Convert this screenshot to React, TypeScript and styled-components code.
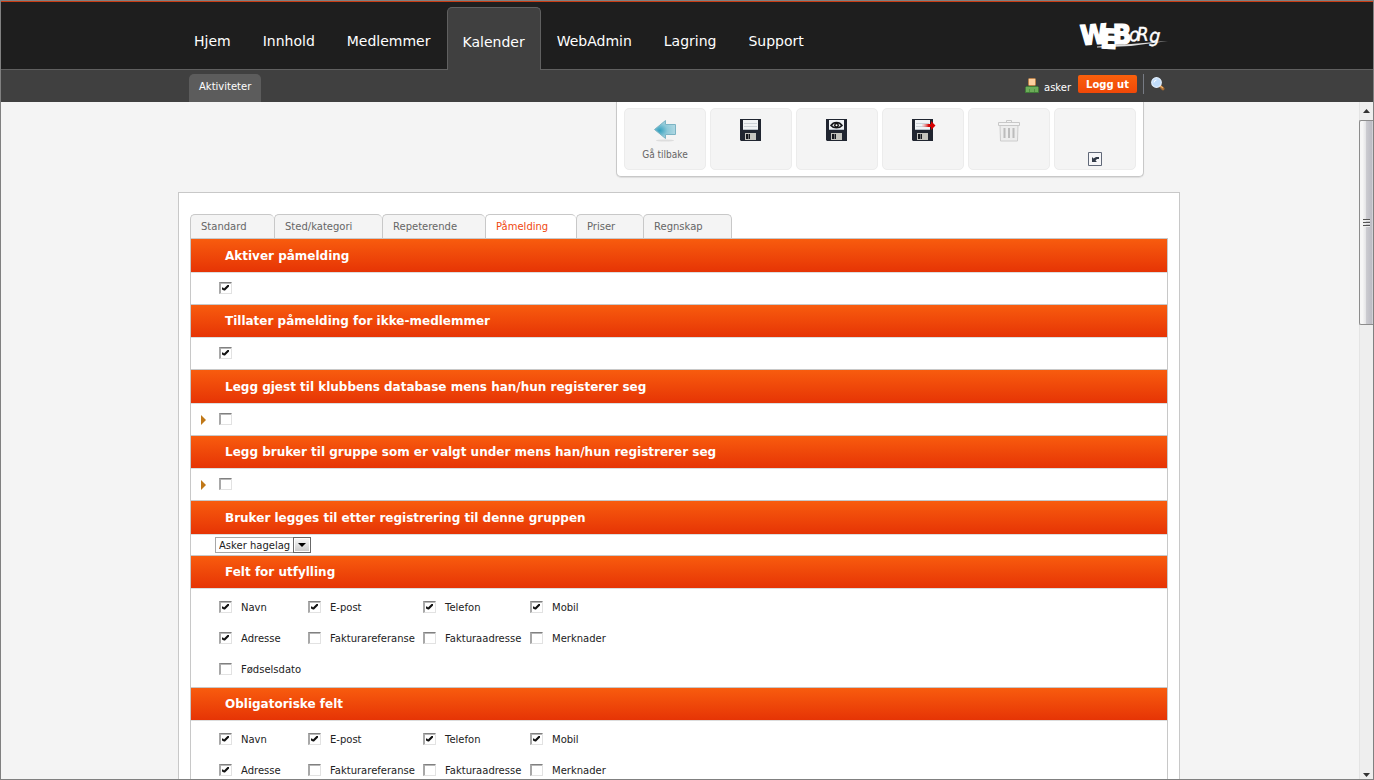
import React from "react";
import styled, { createGlobalStyle, css } from "styled-components";

const Global = createGlobalStyle`
  *, *::before, *::after { box-sizing: border-box; }
  html, body { margin: 0; padding: 0; height: 100%; }
  body, button, select, input { font-family: "DejaVu Sans", Verdana, sans-serif; }
`;

const Page = styled.div`
  display: flex;
  flex-direction: column;
  height: 100vh;
  overflow: hidden;
  border: 1px solid #808080;
  background: #f4f4f4;
  color: #222;
  font-size: 10px;
  line-height: 14px;
`;

const Header = styled.header`
  flex: none;
  padding-right: 16px;
  border-top: 1px solid #c83c14;
  border-bottom: 1px solid #606060;
  background: #1e1e1e;
`;

const HeaderInner = styled.div`
  display: flex;
  align-items: flex-start;
  justify-content: space-between;
  max-width: 1004px;
  height: 67px;
  margin: 0 auto;
`;

const MainNav = styled.nav`
  display: flex;
  height: 68px;
  padding: 5px 0 0 1px;
`;

const NavLink = styled.a<{ $active?: boolean }>`
  padding: 24px 16px 0;
  color: #fff;
  font-size: 14px;
  line-height: 20px;
  text-decoration: none;
  ${(p) =>
    p.$active &&
    css`
      padding: 24px 15px 0;
      border: 1px solid #606060;
      border-bottom: 0;
      border-radius: 5px 5px 0 0;
      background: #404040;
    `}
`;

const LogoLink = styled.a`
  display: block;
  margin: 16px 12px 0 0;
  svg { display: block; }
`;

const SubBar = styled.div`
  flex: none;
  padding-right: 16px;
  background: #404040;
`;

const SubInner = styled.div`
  display: flex;
  justify-content: space-between;
  max-width: 1004px;
  height: 32px;
  margin: 0 auto;
  padding: 4px 16px 0 12px;
`;

const SubTab = styled.a`
  padding: 6px 10px 0;
  border-radius: 5px 5px 0 0;
  background: #5c5c5c;
  color: #fff;
  font-size: 10px;
  line-height: 14px;
  text-decoration: none;
`;

const Account = styled.div`
  display: flex;
  align-items: flex-start;
  color: #fff;
  svg { display: block; }
`;

const UserName = styled.span`
  display: flex;
  gap: 5px;
  margin-right: 7px;
  padding-top: 4px;
  line-height: 20px;
`;

const LogoutButton = styled.button`
  height: 18px;
  margin: 1px 6px 0 0;
  padding: 1px 8px 0;
  border: 0;
  border-radius: 2px;
  background: linear-gradient(#f9600c, #f04808);
  color: #fff;
  font-size: 10px;
  font-weight: bold;
  line-height: 18px;
`;

const SearchButton = styled.button`
  height: 20px;
  padding: 0 0 0 7px;
  border: 0;
  border-left: 1px solid #777b84;
  background: none;
`;

const Body = styled.div`
  display: flex;
  flex: 1;
  min-height: 0;
`;

const Content = styled.main`
  flex: 1;
  min-width: 0;
  overflow: hidden;
  padding-right: 2px;
`;

const Column = styled.div`
  max-width: 1002px;
  margin: 0 auto;
`;

const Toolbar = styled.div`
  display: flex;
  gap: 4px;
  width: fit-content;
  margin: 0 36px 15px auto;
  padding: 6px 7px;
  border: 1px solid #c8c8c8;
  border-top: 0;
  border-radius: 0 0 5px 5px;
  background: #fff;
  box-shadow: 0 1px 1px #ddd;
`;

const ToolButton = styled.button`
  display: flex;
  flex-direction: column;
  align-items: center;
  width: 82px;
  height: 62px;
  padding: 9px 0 0;
  border: 1px solid #ececec;
  border-radius: 5px;
  background: #f4f4f4;
  color: #666;
  font-family: "DejaVu Sans Condensed", "DejaVu Sans", sans-serif;
  font-size: 10px;
  line-height: 14px;
  svg { display: block; flex: none; }
`;

const ToolLabel = styled.span`
  margin-top: 6px;
`;

const MissingIcon = styled.span`
  margin-top: 34px;
`;

const Panel = styled.section`
  padding: 21px 11px 24px;
  border: 1px solid #c8c8c8;
  background: #fff;
`;

const Tabs = styled.div`
  display: flex;
  height: 24px;
`;

const Tab = styled.button<{ $active?: boolean; $w: number }>`
  width: ${(p) => p.$w}px;
  padding: 0 0 0 10px;
  border: 1px solid #c8c8c8;
  border-bottom: 0;
  border-right-width: 0;
  border-radius: 5px 5px 0 0;
  background: ${(p) => (p.$active ? "#fff" : "#f4f4f4")};
  color: ${(p) => (p.$active ? "#f04810" : "#666")};
  font-size: 10px;
  line-height: 22px;
  text-align: left;
  &:last-child { border-right-width: 1px; }
`;

const Sections = styled.div`
  border: 1px solid #c8c8c8;
  border-bottom: 0;
`;

const SectionTitle = styled.h2`
  display: flex;
  align-items: center;
  height: 33px;
  margin: 0;
  padding: 0 34px;
  background: linear-gradient(#f85c0e, #e63405);
  color: #fff;
  font-size: 12px;
  font-weight: bold;
  line-height: 16px;
  &:nth-of-type(even), &:last-of-type { height: 32px; }
`;

const SectionBody = styled.div<{ $kind: "check" | "select" | "grid" }>`
  display: flex;
  align-items: center;
  height: ${(p) => (p.$kind === "check" ? "33px" : p.$kind === "select" ? "22px" : "auto")};
  padding: ${(p) => (p.$kind === "grid" ? "3px 28px 2px" : p.$kind === "select" ? "0 24px" : "0 10px")};
  border-top: 1px solid #ddd;
  border-bottom: 1px solid #c8c8c8;
`;

const Marker = styled.span`
  display: flex;
  width: 18px;
  svg { display: block; }
`;

const Check = styled.input`
  appearance: none;
  position: relative;
  flex: none;
  width: 13px;
  height: 12px;
  margin: 0 0 2px;
  border: 1px solid #e2e2e2;
  border-top: 1px solid #808080;
  border-left: 2px solid #a8a8a8;
  background: #fff;
  box-shadow: inset 0 1px 0 #b8b8b8;
  &:checked::after {
    content: "";
    position: absolute;
    left: 1px;
    top: 2px;
    width: 7px;
    height: 7px;
    background: #111;
    clip-path: polygon(0 3px, 1px 3px, 2px 4px, 6px 0, 7px 0, 7px 2px, 3px 6px, 2px 6px, 0 5px);
  }
`;

const FieldGrid = styled.div`
  display: grid;
  grid-template-columns: 89px 115px 107px 107px;
  grid-auto-rows: 31px;
`;

const Field = styled.label`
  display: flex;
  align-items: center;
  gap: 9px;
  white-space: nowrap;
`;

const SelectBox = styled.span`
  display: grid;
  width: 96px;
  height: 16px;
`;

const Select = styled.select`
  grid-area: 1 / 1;
  appearance: none;
  width: 96px;
  height: 16px;
  padding: 1px 18px 0 3px;
  border: 1px solid #a8a8a8;
  border-radius: 0;
  background: #fff;
  color: #222;
  font-size: 10px;
  line-height: 14px;
`;

const SelectArrow = styled.span`
  grid-area: 1 / 1;
  z-index: 1;
  justify-self: end;
  display: flex;
  align-items: center;
  justify-content: center;
  width: 18px;
  height: 16px;
  border: 1px solid #686868;
  background: linear-gradient(#fafafa, #c8c8c8);
  box-shadow: inset 0 0 0 1px #fff;
  pointer-events: none;
`;

const ScrollTrack = styled.div`
  display: flex;
  flex-direction: column;
  flex: none;
  width: 14px;
  border-left: 1px solid #e4e4e4;
  background: #eee;
  svg { display: block; }
`;

const ScrollEnd = styled.div<{ $short?: boolean }>`
  display: flex;
  align-items: center;
  justify-content: center;
  flex: none;
  height: ${(p) => (p.$short ? 8 : 18)}px;
`;

const ScrollThumb = styled.div`
  display: flex;
  align-items: center;
  justify-content: center;
  height: 31%;
  max-height: 205px;
  margin-left: -1px;
  border: 1px solid #8c8c8c;
  border-right: 0;
  border-radius: 2px 0 0 2px;
  background: linear-gradient(90deg, #f6f6f6 0 20%, #e4e4e6 45%, #cbcbd0 50%, #bcbcc4 90%, #dedee2);
`;

const Spacer = styled.div`
  flex: 1;
`;

const Logo = () => (
  <svg width="90" height="36" viewBox="0 0 90 36" overflow="visible" role="img" aria-label="WEBorg">
    <path d="M18 28.500 52 26 89 23 52 28 18 29.500Z" fill="#ddd" />
    <text
      x="2 21 34"
      y="27 30 26"
      rotate="-4 3 -1"
      fontSize="27"
      fontWeight="bold"
      fontFamily="'DejaVu Sans Condensed','DejaVu Sans',sans-serif"
      fill="#fff"
      stroke="#fff"
      strokeWidth="1.4"
    >
      WEB
    </text>
    <text
      x="50 58 70"
      y="23 23 24"
      rotate="2 -2 4"
      fontSize="19"
      fontFamily="'DejaVu Sans Condensed','DejaVu Sans',sans-serif"
      fontStyle="italic"
      fill="#fff"
      stroke="#fff"
      strokeWidth=".4"
    >
      oRg
    </text>
  </svg>
);

const UserIcon = () => (
  <svg width="14" height="15" viewBox="0 0 14 15" aria-hidden="true">
    <rect x="3.5" y=".5" width="7" height="7" rx="1" fill="#fdcf9f" stroke="#b98048" />
    <path d="M1.500 8.500h11l1 1v5H.5v-5Z" fill="#6cac58" stroke="#407c38" />
    <path d="M4.500 11v3M9.500 11v3" stroke="#508f44" />
  </svg>
);

const SearchIcon = () => (
  <svg width="14" height="14" viewBox="0 0 14 14" aria-hidden="true">
    <path d="m9 9 3 2.800" stroke="#a86c34" strokeWidth="3" strokeLinecap="round" />
    <path d="m9 8.600 3 2.400" stroke="#f2b46c" strokeWidth="1.200" />
    <circle cx="5.500" cy="5.500" r="4.800" fill="#c0dcfa" stroke="#e2effc" strokeWidth="1.200" />
    <path d="M3 5.500A2.600 2.600 0 0 1 5.500 3" stroke="#fff" fill="none" />
  </svg>
);

const BackIcon = () => (
  <svg width="24" height="24" viewBox="0 0 24 24" aria-hidden="true">
    <defs>
      <radialGradient id="back-fill" cx=".25" cy=".55" r=".8">
        <stop offset="0" stopColor="#34a0be" />
        <stop offset=".45" stopColor="#8cc8d8" />
        <stop offset="1" stopColor="#b4dae4" />
      </radialGradient>
    </defs>
    <ellipse cx="12" cy="22.500" rx="9" ry="1" fill="#ddd" />
    <path d="M1.500 11.500 12.500 2.500V6.500H22.500V16.500H12.500V20.500Z" fill="url(#back-fill)" stroke="#7cb4c4" />
  </svg>
);

const TrashIcon = () => (
  <svg width="24" height="24" viewBox="0 0 24 24" aria-hidden="true">
    <path d="M9.500 4V2.500h5V4" fill="none" stroke="#c8c8c8" />
    <path d="M3 7h18l-.5 16h-17Z" fill="#ededed" stroke="#ccc" />
    <path d="M1.500 4.500h21v3h-21Z" fill="#f4f4f4" stroke="#c8c8c8" />
    <path d="M7.500 10v10M12 10v10M16.500 10v10" stroke="#bcbcbc" strokeWidth="2" />
  </svg>
);

const DiskIcon = ({ variant }: { variant?: "preview" | "exit" }) => (
  <svg width="24" height="24" viewBox="0 0 24 24" overflow="visible" aria-hidden="true">
    <path d="M1 1h21v22H2l-1-1Z" fill="#202530" />
    <path d="M4 2h15v10H4Z" fill="#f0f3f6" />
    <path d="M4 11h15v1H4Z" fill="#b8c0c8" />
    {variant !== "preview" && <path d="M5 5.500h13M5 8.500h13" stroke="#ccd2d8" />}
    <path d="M6 15h11v7H6Z" fill="#c4c4be" />
    <path d="M7 16h4v5H7Z" fill="#16181e" />
    <path d="M9 16h1v5H9Z" fill="#6c6e72" />
    {variant === "preview" && (
      <>
        <path d="M6 7.500C8.500 3.500 14.500 3.500 17 7.500 14.500 10.500 8.500 10.500 6 7.500Z" fill="#e4e6e8" stroke="#16181c" strokeWidth="1.600" />
        <circle cx="11.500" cy="7.200" r="2.400" fill="#111" />
        <circle cx="11.500" cy="7.200" r="1" fill="#fff" />
      </>
    )}
    {variant === "exit" && (
      <>
        <defs>
          <linearGradient id="exit-fill">
            <stop offset="0" stopColor="#f4a0a0" stopOpacity=".2" />
            <stop offset=".5" stopColor="#d40000" />
          </linearGradient>
        </defs>
        <path d="M11 6h9V3l4.500 4.500L20 12V9h-9Z" fill="url(#exit-fill)" />
      </>
    )}
  </svg>
);

const BrokenImage = () => (
  <svg width="14" height="14" viewBox="0 0 14 14" aria-hidden="true">
    <path d="M.5.5h13v13H.5Z" fill="#f6f6f8" stroke="#606878" />
    <path d="M4 5v5h5L7.500 8.500 9 7h2V5H8L5.500 6.500Z" fill="#333b48" />
  </svg>
);

const NAV = ["Hjem", "Innhold", "Medlemmer", "Kalender", "WebAdmin", "Lagring", "Support"];

const TABS: [string, number][] = [
  ["Standard", 84],
  ["Sted/kategori", 108],
  ["Repeterende", 103],
  ["Påmelding", 91],
  ["Priser", 67],
  ["Regnskap", 89],
];

const FIELDS: [string, boolean][] = [
  ["Navn", true],
  ["E-post", true],
  ["Telefon", true],
  ["Mobil", true],
  ["Adresse", true],
  ["Fakturareferanse", false],
  ["Fakturaadresse", false],
  ["Merknader", false],
  ["Fødselsdato", false],
];

type ToggleProps = { title: string; checked?: boolean; marker?: boolean };

const ToggleSection = ({ title, checked, marker }: ToggleProps) => (
  <>
    <SectionTitle>{title}</SectionTitle>
    <SectionBody $kind="check">
      <Marker>
        {marker && (
          <svg width="6" height="10" viewBox="0 0 6 10" aria-hidden="true">
            <path d="M0 0l5 5-5 5Z" fill="#c07818" />
          </svg>
        )}
      </Marker>
      <Check type="checkbox" aria-label={title} defaultChecked={checked} />
    </SectionBody>
  </>
);

const FieldsSection = ({ title }: { title: string }) => (
  <>
    <SectionTitle>{title}</SectionTitle>
    <SectionBody $kind="grid">
      <FieldGrid>
        {FIELDS.map(([name, checked]) => (
          <Field key={name}>
            <Check type="checkbox" defaultChecked={checked} />
            {name}
          </Field>
        ))}
      </FieldGrid>
    </SectionBody>
  </>
);

export default function App() {
  return (
    <>
      <Global />
      <Page>
        <Header>
          <HeaderInner>
            <MainNav>
              {NAV.map((item) => (
                <NavLink key={item} href="#" $active={item === "Kalender"}>
                  {item}
                </NavLink>
              ))}
            </MainNav>
            <LogoLink href="#">
              <Logo />
            </LogoLink>
          </HeaderInner>
        </Header>
        <SubBar>
          <SubInner>
            <SubTab href="#">Aktiviteter</SubTab>
            <Account>
              <UserName>
                <UserIcon />
                asker
              </UserName>
              <LogoutButton type="button">Logg ut</LogoutButton>
              <SearchButton type="button" aria-label="Søk">
                <SearchIcon />
              </SearchButton>
            </Account>
          </SubInner>
        </SubBar>
        <Body>
          <Content>
            <Column>
              <Toolbar>
                <ToolButton type="button">
                  <BackIcon />
                  <ToolLabel>Gå tilbake</ToolLabel>
                </ToolButton>
                <ToolButton type="button" aria-label="Lagre">
                  <DiskIcon />
                </ToolButton>
                <ToolButton type="button" aria-label="Lagre og vis">
                  <DiskIcon variant="preview" />
                </ToolButton>
                <ToolButton type="button" aria-label="Lagre og lukk">
                  <DiskIcon variant="exit" />
                </ToolButton>
                <ToolButton type="button" aria-label="Slett">
                  <TrashIcon />
                </ToolButton>
                <ToolButton type="button" aria-label="Mer">
                  <MissingIcon>
                    <BrokenImage />
                  </MissingIcon>
                </ToolButton>
              </Toolbar>
              <Panel>
                <Tabs role="tablist">
                  {TABS.map(([name, width]) => (
                    <Tab
                      key={name}
                      type="button"
                      role="tab"
                      aria-selected={name === "Påmelding"}
                      $active={name === "Påmelding"}
                      $w={width}
                    >
                      {name}
                    </Tab>
                  ))}
                </Tabs>
                <Sections>
                  <ToggleSection title="Aktiver påmelding" checked />
                  <ToggleSection title="Tillater påmelding for ikke-medlemmer" checked />
                  <ToggleSection title="Legg gjest til klubbens database mens han/hun registerer seg" marker />
                  <ToggleSection title="Legg bruker til gruppe som er valgt under mens han/hun registrerer seg" marker />
                  <SectionTitle id="group-title">Bruker legges til etter registrering til denne gruppen</SectionTitle>
                  <SectionBody $kind="select">
                    <SelectBox>
                      <Select aria-labelledby="group-title">
                        <option>Asker hagelag</option>
                      </Select>
                      <SelectArrow>
                        <svg width="8" height="4" viewBox="0 0 8 4" aria-hidden="true">
                          <path d="M0 0h8L4 4Z" fill="#000" />
                        </svg>
                      </SelectArrow>
                    </SelectBox>
                  </SectionBody>
                  <FieldsSection title="Felt for utfylling" />
                  <FieldsSection title="Obligatoriske felt" />
                </Sections>
              </Panel>
            </Column>
          </Content>
          <ScrollTrack aria-hidden="true">
            <ScrollEnd>
              <svg width="7" height="4" viewBox="0 0 7 4">
                <path d="M3.500 0 7 4H0Z" fill="#333" />
              </svg>
            </ScrollEnd>
            <ScrollThumb>
              <svg width="7" height="8" viewBox="0 0 7 8">
                <path d="M0 .5h7M0 3.500h7M0 6.500h7" stroke="#555" />
                <path d="M0 1.500h7M0 4.500h7M0 7.500h7" stroke="#eee" />
              </svg>
            </ScrollThumb>
            <Spacer />
            <ScrollEnd $short>
              <svg width="7" height="4" viewBox="0 0 7 4">
                <path d="M0 0h7L3.500 4Z" fill="#333" />
              </svg>
            </ScrollEnd>
          </ScrollTrack>
        </Body>
      </Page>
    </>
  );
}
